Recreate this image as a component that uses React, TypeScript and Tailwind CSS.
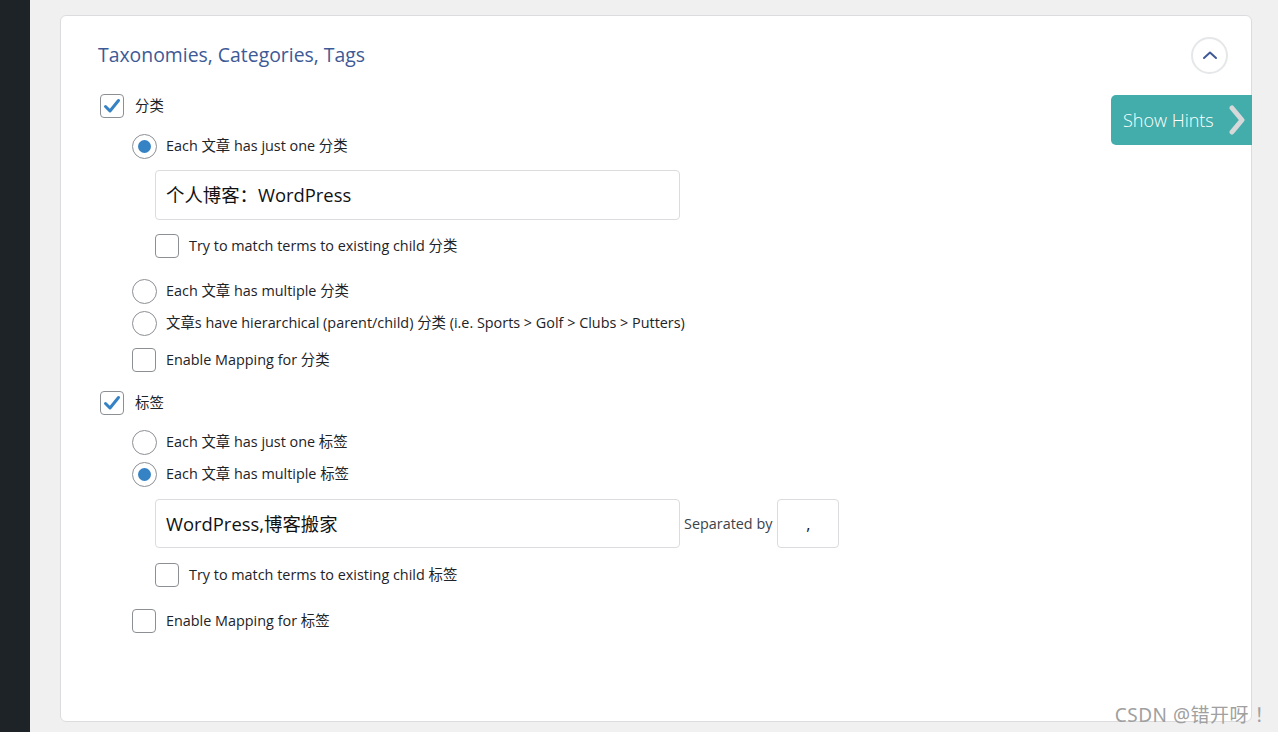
import React from "react";

const FONT = { fontFamily: '"Open Sans", "Noto Sans", "Noto Sans CJK SC", sans-serif' };

function Checkbox({ checked = false }: { checked?: boolean }) {
  return (
    <span className="flex h-[24px] w-[24px] shrink-0 items-center justify-center rounded-[4px] border border-[#8c8f94] bg-white">
      {checked && (
        <svg width="18" height="18" viewBox="0 0 18 18">
          <path d="M2.5 9.5 L7 14 L15.5 3.5" fill="none" stroke="#3582c4" strokeWidth="3" strokeLinecap="round" strokeLinejoin="round" />
        </svg>
      )}
    </span>
  );
}

function Radio({ checked = false }: { checked?: boolean }) {
  return (
    <span className="flex h-[25px] w-[25px] shrink-0 items-center justify-center rounded-full border border-[#8c8f94] bg-white">
      {checked && <span className="h-[13px] w-[13px] rounded-full bg-[#3582c4]" />}
    </span>
  );
}

function Row({ children, className = "" }: { children: React.ReactNode; className?: string }) {
  return <div className={`flex items-center text-[14.4px] text-[#1d2327] ${className}`}>{children}</div>;
}

export default function App() {
  return (
    <div className="relative flex h-[732px] w-[1278px] overflow-hidden bg-[#f0f0f1]" style={FONT}>
      <div className="w-[30px] shrink-0 bg-[#1d2327]" />
      <div className="flex-1 pl-[30px] pr-[26px] pt-[15px] pb-[10px]">
        <div className="relative h-full rounded-[6px] border border-[#dcdcde] bg-white">
          <div className="flex items-center justify-between pl-[37px] pr-[23px] pt-[19px]">
            <h2 className="text-[19.4px] leading-[40px] text-[#3e5a96]">Taxonomies, Categories, Tags</h2>
            <button className="flex h-[37px] w-[37px] items-center justify-center rounded-full border-2 border-[#e6e7e9] bg-white">
              <svg width="16" height="10" viewBox="0 0 16 10">
                <path d="M2 8 L8 2.5 L14 8" fill="none" stroke="#3e5a96" strokeWidth="2" strokeLinecap="round" strokeLinejoin="round" />
              </svg>
            </button>
          </div>

          <div className="absolute right-[-1px] top-[79px] flex h-[50px] w-[141px] items-center rounded-l-[5px] bg-[#42adab] pl-[12px] text-white">
            <span className="text-[18px] font-light">Show Hints</span>
            <svg className="ml-[13px]" width="20" height="30" viewBox="0 0 20 30">
              <path d="M5 3 L15 15 L5 27" fill="none" stroke="#d6d8d9" strokeWidth="5" strokeLinecap="round" strokeLinejoin="round" />
            </svg>
          </div>

          <div className="flex flex-col pl-[39px] pt-[19px]">
            <Row className="h-[24px]">
              <Checkbox checked />
              <span className="ml-[11px]">分类</span>
            </Row>
            <div className="flex flex-col pl-[32px]">
              <Row className="mt-[15px] h-[26px]">
                <Radio checked />
                <span className="ml-[9px]">Each 文章 has just one 分类</span>
              </Row>
              <div className="mt-[11px] pl-[23px]">
                <div className="flex h-[50px] w-[525px] items-center rounded-[4px] border border-[#dcdcde] bg-white px-[10px] text-[18.4px] text-[#111]">
                  个人博客：WordPress
                </div>
                <Row className="mt-[13px] h-[25px]">
                  <Checkbox />
                  <span className="ml-[10px]">Try to match terms to existing child 分类</span>
                </Row>
              </div>
              <Row className="mt-[20px] h-[26px]">
                <Radio />
                <span className="ml-[9px]">Each 文章 has multiple 分类</span>
              </Row>
              <Row className="mt-[6px] h-[26px]">
                <Radio />
                <span className="ml-[9px]">文章s have hierarchical (parent/child) 分类 (i.e. Sports &gt; Golf &gt; Clubs &gt; Putters)</span>
              </Row>
              <Row className="mt-[11px] h-[25px]">
                <Checkbox />
                <span className="ml-[10px]">Enable Mapping for 分类</span>
              </Row>
            </div>

            <Row className="mt-[19px] h-[24px]">
              <Checkbox checked />
              <span className="ml-[11px]">标签</span>
            </Row>
            <div className="flex flex-col pl-[32px]">
              <Row className="mt-[14px] h-[26px]">
                <Radio />
                <span className="ml-[9px]">Each 文章 has just one 标签</span>
              </Row>
              <Row className="mt-[6px] h-[26px]">
                <Radio checked />
                <span className="ml-[9px]">Each 文章 has multiple 标签</span>
              </Row>
              <div className="mt-[12px] pl-[23px]">
                <div className="flex items-center">
                  <div className="flex h-[49px] w-[525px] items-center rounded-[4px] border border-[#dcdcde] bg-white px-[10px] text-[18.4px] text-[#111]">
                    WordPress,博客搬家
                  </div>
                  <span className="ml-[4px] text-[14.4px] text-[#3c434a]">Separated by</span>
                  <div className="ml-[5px] flex h-[49px] w-[62px] items-center justify-center rounded-[4px] border border-[#dcdcde] bg-white text-[16px] text-[#111]">
                    ,
                  </div>
                </div>
                <Row className="mt-[14px] h-[25px]">
                  <Checkbox />
                  <span className="ml-[10px]">Try to match terms to existing child 标签</span>
                </Row>
              </div>
              <Row className="mt-[21px] h-[25px]">
                <Checkbox />
                <span className="ml-[10px]">Enable Mapping for 标签</span>
              </Row>
            </div>
          </div>
        </div>
      </div>
      <div className="pointer-events-none absolute bottom-[3px] right-[4px] text-[19px] tracking-[0.5px] text-[#a0a0a0]" style={{ fontFamily: '"Noto Sans", "Noto Sans CJK SC", sans-serif' }}>
        CSDN @错开呀 ！
      </div>
    </div>
  );
}
